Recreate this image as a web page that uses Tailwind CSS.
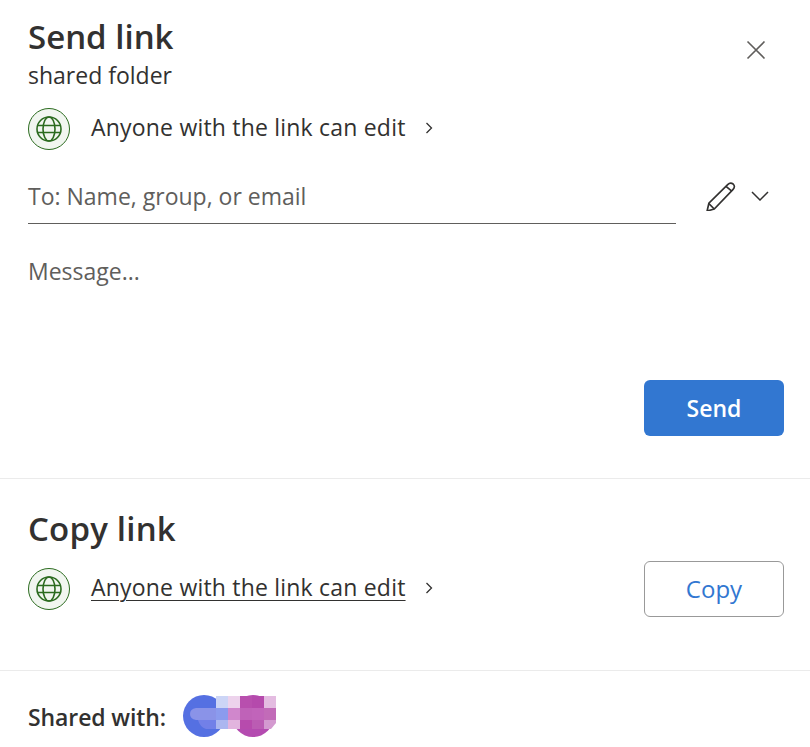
<!DOCTYPE html>
<html lang="en">
<head>
  <meta charset="UTF-8">
  <title>Send link</title>
  <script src="https://cdn.jsdelivr.net/npm/@tailwindcss/browser@4"></script>
</head>
<body class="bg-white h-[747px] overflow-hidden font-['Open_Sans','Noto_Sans',sans-serif] text-[#323130]">
  <!-- Send link -->
  <section class="h-[479px] border-b border-[#ebebeb] pl-[28px] pr-[26px] flex flex-col">
    <div class="flex justify-between">
      <div class="pt-[15px]">
        <h1 class="text-[33px] leading-[44px] font-semibold">Send link</h1>
        <p class="text-[23px] leading-[30px] mt-[1px]">shared folder</p>
      </div>
      <button class="mt-[39px] mr-[17px] w-[22px] h-[22px] text-[#605e5c]">
        <svg viewBox="0 0 22 22" class="w-[22px] h-[22px]" fill="none" stroke="currentColor" stroke-width="1.6"><path d="M2.5 2.5l17 17M19.5 2.5l-17 17"/></svg>
      </button>
    </div>
    <div class="flex items-center mt-[18px] h-[42px]">
      <svg viewBox="0 0 42 42" class="w-[42px] h-[42px]" fill="none" stroke="#2b6b1f">
        <circle cx="21" cy="21" r="20.5" fill="#f1f6f0"/>
        <g stroke-width="1.6">
          <circle cx="21" cy="21" r="12"/>
          <ellipse cx="21" cy="21" rx="6" ry="12"/>
          <path d="M9.5 17.5h23M9.5 24.5h23"/>
        </g>
      </svg>
      <span class="ml-[21px] mb-[4px] text-[23px] tracking-[0.2px]">Anyone with the link can edit</span>
      <svg viewBox="0 0 8 12" class="ml-[19px] mb-[2px] w-[8px] h-[12px]" fill="none" stroke="#323130" stroke-width="1.3"><path d="M1.5 1l5 5-5 5"/></svg>
    </div>
    <div class="flex items-start mt-[20px]">
      <div class="w-[648px] h-[54px] border-b border-[#605e5c] text-[23px] leading-[28px] text-[#605e5c] pt-[12px]">To: Name, group, or email</div>
      <svg viewBox="1 1 27 27" class="ml-[30px] mt-[11px] w-[30px] h-[30px]" fill="none" stroke="#323130" stroke-width="1.5">
        <path d="M2 28l1.6-7L20.5 4.2c1.6-1.6 3.2-1.9 4.9-.5 1.7 1.6 1.4 3.4-.2 5L8.4 26.2z"/>
        <path d="M19 5.8l5.2 4.4M3.6 21.3l4.8 4.9"/>
      </svg>
      <svg viewBox="0 0 18 10" class="ml-[15px] mt-[21px] w-[18px] h-[10px]" fill="none" stroke="#323130" stroke-width="1.5"><path d="M1 1l8 8 8-8"/></svg>
    </div>
    <div class="mt-[32px] text-[23px] leading-[30px] text-[#605e5c]">Message...</div>
    <div class="flex justify-end mt-[94px]">
      <button class="w-[140px] h-[56px] rounded-[6px] bg-[#3277d1] text-white text-[23px] font-semibold">Send</button>
    </div>
  </section>
  <!-- Copy link -->
  <section class="h-[192px] border-b border-[#ebebeb] pl-[28px] pr-[26px]">
    <h2 class="pt-[28px] text-[33px] leading-[44px] font-semibold tracking-[0.2px]">Copy link</h2>
    <div class="flex items-start justify-between">
      <div class="flex items-center h-[42px] mt-[17px]">
        <svg viewBox="0 0 42 42" class="w-[42px] h-[42px]" fill="none" stroke="#2b6b1f">
          <circle cx="21" cy="21" r="20.5" fill="#f1f6f0"/>
          <g stroke-width="1.6">
            <circle cx="21" cy="21" r="12"/>
            <ellipse cx="21" cy="21" rx="6" ry="12"/>
            <path d="M9.5 17.5h23M9.5 24.5h23"/>
          </g>
        </svg>
        <span class="ml-[21px] mb-[4px] text-[23px] tracking-[0.2px] underline underline-offset-[4px] decoration-1">Anyone with the link can edit</span>
        <svg viewBox="0 0 8 12" class="ml-[19px] mb-[2px] w-[8px] h-[12px]" fill="none" stroke="#323130" stroke-width="1.3"><path d="M1.5 1l5 5-5 5"/></svg>
      </div>
      <button class="w-[140px] h-[56px] mt-[10px] rounded-[6px] border border-[#999] text-[#3277d1] text-[24px] font-medium">Copy</button>
    </div>
  </section>
  <!-- Shared with -->
  <section class="flex items-center pl-[28px] pt-[16px] h-[76px]">
    <span class="text-[23px] font-semibold tracking-[-0.1px]">Shared with:</span>
    <svg viewBox="0 0 94 44" class="ml-[16px] mb-[4px] w-[94px] h-[44px]">
      <circle cx="22" cy="23" r="21" fill="#5570e2"/>
      <circle cx="71" cy="23" r="21" fill="#b44bb0"/>
      <rect x="34" y="3" width="12" height="13" fill="#ccd5f6"/>
      <rect x="46" y="3" width="12" height="13" fill="#edd3ec"/>
      <rect x="58" y="3" width="12" height="13" fill="#b84fae"/>
      <rect x="70" y="3" width="12" height="13" fill="#b54aac"/>
      <rect x="82" y="3" width="12" height="13" fill="#e4bce1"/>
      <path d="M14 15h20v12H14q-6-1-6-6t6-6z" fill="#8a93e8"/>
      <path d="M16 27h18v9H24q-6-2-8-9z" fill="#7280e8"/>
      <rect x="34" y="15" width="12" height="12" fill="#8b9bee"/>
      <rect x="46" y="15" width="12" height="12" fill="#d087cc"/>
      <rect x="58" y="15" width="12" height="12" fill="#bf62b8"/>
      <rect x="70" y="15" width="12" height="12" fill="#c164ba"/>
      <rect x="82" y="15" width="12" height="12" fill="#c26bb8"/>
      <rect x="34" y="27" width="12" height="9" fill="#abb6f0"/>
      <rect x="46" y="27" width="12" height="9" fill="#e2b4de"/>
      <rect x="58" y="27" width="12" height="9" fill="#b74bad"/>
      <rect x="70" y="27" width="12" height="9" fill="#bb5cb3"/>
      <path d="M82 27h12v3l-5 6h-7z" fill="#d49ad0"/>
    </svg>
  </section>
</body>
</html>
